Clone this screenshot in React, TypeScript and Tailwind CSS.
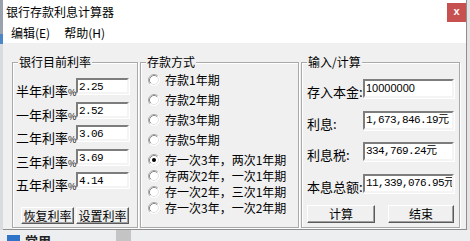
import React from "react";

const monoCls = "font-['Liberation_Mono','Noto_Sans_CJK_SC',monospace] text-[11px] tracking-[-0.6px] leading-[13px]";

function Edit({ value, w, h, mono = true }: { value: string; w: string; h: string; mono?: boolean }) {
  return (
    <div
      className={`${w} ${h} shrink-0 bg-white border-2 border-t-[#7d7d7d] border-l-[#7d7d7d] border-r-[#f4f4f4] border-b-[#f4f4f4] shadow-[1px_1px_0_#ffffff] pl-[1px] pt-[1px] overflow-hidden whitespace-nowrap ${
        mono ? monoCls : "font-['Liberation_Sans',sans-serif] text-[11px] leading-[13px]"
      }`}
    >
      {value}
    </div>
  );
}

function Btn({ label, w, h }: { label: string; w: string; h: string }) {
  return (
    <div
      className={`${w} ${h} shrink-0 flex items-center justify-center bg-[#f0f0f0] border border-t-white border-l-white border-r-[#5a5a5a] border-b-[#5a5a5a] shadow-[inset_-1px_-1px_0_#a0a0a0] text-[12px] leading-none`}
    >
      {label}
    </div>
  );
}

function Radio({ checked }: { checked?: boolean }) {
  return (
    <svg width="12" height="12" viewBox="0 0 12 12" className="shrink-0">
      <circle cx="6" cy="6" r="5.5" fill="#ffffff" />
      <path d="M9.89 2.11 A5.5 5.5 0 0 0 2.11 9.89" stroke="#a8a8a8" strokeWidth="1" fill="none" />
      <path d="M9.18 2.82 A4.5 4.5 0 0 0 2.82 9.18" stroke="#8a8a8a" strokeWidth="1" fill="none" />
      <path d="M2.11 9.89 A5.5 5.5 0 0 0 9.89 2.11" stroke="#ffffff" strokeWidth="1" fill="none" />
      <path d="M2.82 9.18 A4.5 4.5 0 0 0 9.18 2.82" stroke="#e3e3e3" strokeWidth="1" fill="none" />
      {checked && <circle cx="6" cy="6" r="2" fill="#000000" />}
    </svg>
  );
}

function Group({ title, w, children, cls }: { title: string; w: string; children: React.ReactNode; cls: string }) {
  return (
    <div className={`relative ${w} h-[166px] mt-[19px] border border-[#a9a9a9] shadow-[inset_1px_1px_0_#ffffff,1px_1px_0_#ffffff] ${cls}`}>
      <span className="absolute -top-[9px] left-[5px] px-[1px] bg-[#f0f0f0] text-[12px] leading-[16px]">{title}</span>
      {children}
    </div>
  );
}

export default function App() {
  const rates = [
    ["半年利率", "2.25"],
    ["一年利率", "2.52"],
    ["二年利率", "3.06"],
    ["三年利率", "3.69"],
    ["五年利率", "4.14"],
  ];
  const radiosA = ["存款1年期", "存款2年期", "存款3年期", "存款5年期", "存一次3年，两次1年期"];
  const radiosB = ["存两次2年，一次1年期", "存一次2年，三次1年期", "存一次3年，一次2年期"];
  const calc = [
    ["存入本金:", "10000000", false],
    ["利息:", "1,673,846.19元", true],
    ["利息税:", "334,769.24元", true],
    ["本息总额:", "11,339,076.95元", true],
  ] as const;

  return (
    <div className="w-[470px] h-[241px] overflow-hidden bg-[#e6e6e6] font-['Noto_Sans_CJK_SC',sans-serif] text-black flex flex-col">
      <div className="flex h-[230px] shrink-0">
        <div className="w-[3px] flex flex-col bg-[#d6d8db]">
          <div className="h-[34px] bg-[#9aa3ad]" />
          <div className="h-[10px] bg-[#4a86c8]" />
          <div className="flex-1 bg-[#d9dcdf]" />
        </div>
        <div className="w-[464px] flex flex-col bg-white border-r border-b border-[#8e8e8e]">
          <div className="h-[22px] flex items-start shrink-0">
            <span className="pl-[3px] pt-[4px] text-[12px] leading-[16px]">银行存款利息计算器</span>
            <div className="ml-auto mt-[3px] w-[19px] h-[19px] bg-[#c75050] flex items-center justify-center text-white text-[11px] font-bold font-['Liberation_Sans',sans-serif] leading-none pb-[2px]">
              x
            </div>
          </div>
          <div className="h-[21px] flex items-center gap-[14px] pl-[8px] text-[12px] shrink-0">
            <span>编辑(E)</span>
            <span>帮助(H)</span>
          </div>
          <div className="flex-1 bg-[#f0f0f0] flex items-start gap-[2px] pl-[9px]">
            <Group title="银行目前利率" w="w-[126px]" cls="pl-[3px] pr-[8px] pt-[15px]">
              <div className="flex flex-col gap-[7.5px]">
                {rates.map(([l, v]) => (
                  <div key={l} className="flex items-start h-[16px]">
                    <span className="w-[60px] pt-[5px] text-[13px] leading-[16px] whitespace-nowrap">
                      {l}
                      <span className="text-[9px]">%</span>
                    </span>
                    <Edit value={v} w="w-[53px]" h="h-[16px]" />
                  </div>
                ))}
              </div>
              <div className="flex justify-end gap-[2px] mt-[19px]">
                <Btn label="恢复利率" w="w-[53px]" h="h-[17px]" />
                <Btn label="设置利率" w="w-[53px]" h="h-[17px]" />
              </div>
            </Group>
            <Group title="存款方式" w="w-[159px]" cls="pl-[7px] pt-[9px]">
              <div className="flex flex-col gap-[4px]">
                {radiosA.map((r, i) => (
                  <div key={r} className="flex items-center gap-[5px] h-[16px] text-[12px] leading-[16px] whitespace-nowrap">
                    <Radio checked={i === 4} />
                    <span>{r}</span>
                  </div>
                ))}
              </div>
              <div className="flex flex-col">
                {radiosB.map((r) => (
                  <div key={r} className="flex items-center gap-[5px] h-[16px] text-[12px] leading-[16px] whitespace-nowrap">
                    <Radio />
                    <span>{r}</span>
                  </div>
                ))}
              </div>
            </Group>
            <Group title="输入/计算" w="w-[159px]" cls="pl-[5px] pr-[5px] pt-[16px]">
              <div className="flex flex-col gap-[12.5px]">
                {calc.map(([l, v, mono]) => (
                  <div key={l} className="flex items-start h-[19px]">
                    <span className="w-[56px] pt-[5px] text-[13px] leading-[16px] whitespace-nowrap">{l}</span>
                    <Edit value={v} w="w-[91px]" h="h-[19px]" mono={mono} />
                  </div>
                ))}
              </div>
              <div className="flex gap-[13px] mt-[12.5px]">
                <Btn label="计算" w="w-[68px]" h="h-[18px]" />
                <Btn label="结束" w="w-[66px]" h="h-[18px]" />
              </div>
            </Group>
          </div>
        </div>
        <div className="flex-1 bg-[#e4e4e4]" />
      </div>
      <div className="flex-1 flex items-start bg-[#eceef0] overflow-hidden">
        <div className="w-[13px] h-[8px] ml-[7px] mt-[5px] bg-[#2f74c6]" />
        <span className="ml-[5px] mt-[3px] text-[13px] leading-[16px] font-bold text-[#222]">常用</span>
        <div className="w-[15px] h-[11px] ml-[65px] bg-[#c4c4c4]" />
      </div>
    </div>
  );
}
